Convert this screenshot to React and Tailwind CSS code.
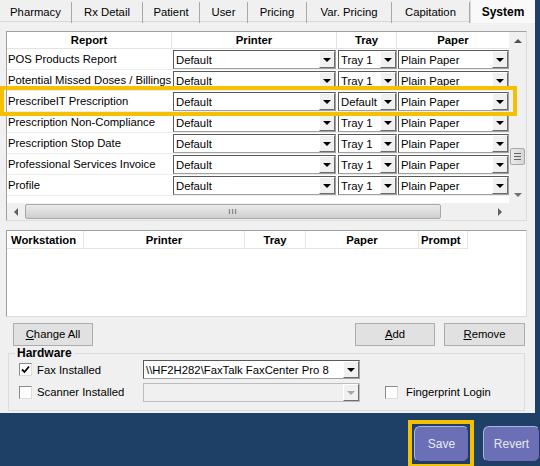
import React from 'react';

const rows = [
    { name: 'POS Products Report', printer: 'Default', tray: 'Tray 1', paper: 'Plain Paper' },
    { name: 'Potential Missed Doses / Billings', printer: 'Default', tray: 'Tray 1', paper: 'Plain Paper' },
    { name: 'PrescribeIT Prescription', printer: 'Default', tray: 'Default', paper: 'Plain Paper' },
    { name: 'Prescription Non-Compliance', printer: 'Default', tray: 'Tray 1', paper: 'Plain Paper' },
    { name: 'Prescription Stop Date', printer: 'Default', tray: 'Tray 1', paper: 'Plain Paper' },
    { name: 'Professional Services Invoice', printer: 'Default', tray: 'Tray 1', paper: 'Plain Paper' },
    { name: 'Profile', printer: 'Default', tray: 'Tray 1', paper: 'Plain Paper' },
];

const tabs = [
    { label: 'Pharmacy', w: 'w-[72px]' },
    { label: 'Rx Detail', w: 'w-[71px]' },
    { label: 'Patient', w: 'w-[57px]' },
    { label: 'User', w: 'w-[48px]' },
    { label: 'Pricing', w: 'w-[59px]' },
    { label: 'Var. Pricing', w: 'w-[85px]' },
    { label: 'Capitation', w: 'w-[78px]' },
];

const DropBtn = ({ disabled }) => (
    <div className="w-[16px] h-full shrink-0 flex items-center justify-center bg-[#f0f0f0] border border-white border-r-[#6d6d6d] border-b-[#6d6d6d]">
        <div className={disabled
            ? 'border-x-[4px] border-t-[4px] border-x-transparent border-t-[#a6a6a6]'
            : 'border-x-[4px] border-t-[4px] border-x-transparent border-t-black'} />
    </div>
);

const Combo = ({ value, className, disabled }) => (
    <div className={`flex h-[19px] border border-[#a0a0a0] border-l-[#5a5a5a] border-t-[#5a5a5a] ${disabled ? 'bg-[#f0f0f0]' : 'bg-white'} ${className}`}>
        <div className="flex-1 overflow-hidden whitespace-nowrap pl-[2px] leading-[18px]">{value}</div>
        <DropBtn disabled={disabled} />
    </div>
);

const Check = ({ checked }) => (
    <div className="w-[13px] h-[13px] shrink-0 bg-white border border-[#8a8a8a] border-b-[#dcdcdc] border-r-[#dcdcdc] flex items-center justify-center">
        {checked && (
            <svg width="9" height="9" viewBox="0 0 9 9">
                <path d="M1 4.5 L3.5 7 L8 1.5" stroke="black" strokeWidth="1.8" fill="none" />
            </svg>
        )}
    </div>
);

const WinButton = ({ children, className }) => (
    <button className={`h-[23px] bg-[#e1e1e1] border border-[#adadad] ${className}`}>
        {children}
    </button>
);

const App = () => {
    return (
        <div className="relative w-[540px] h-[466px] overflow-hidden bg-[#1e3f66] text-[11.3px] text-black font-['Liberation_Sans',Arial,sans-serif]">
            <div className="w-[535px] h-[413px] bg-[#f0f0f0] flex flex-col">
                {/* tabs */}
                <div className="h-[22px] flex shrink-0 border-b border-[#d9d9d9]">
                    {tabs.map((t) => (
                        <div key={t.label} className={`${t.w} h-full flex items-center justify-center border-r border-[#a8a8a8] my-[2px]`}>
                            {t.label}
                        </div>
                    ))}
                    <div className="w-[65px] h-[23px] flex items-center justify-center font-bold text-[12px] bg-[#f9f9f9] border-l border-[#d9d9d9]">
                        System
                    </div>
                </div>

                {/* report grid */}
                <div className="ml-[6px] mt-[9px] w-[521px] h-[190px] shrink-0 bg-white border border-[#a0a0a0] border-b-[#dcdcdc] border-r-[#dcdcdc] flex">
                    <div className="w-[502px] flex flex-col">
                        <div className="h-[17px] flex font-bold border-b border-[#e3e3e3]">
                            <div className="w-[165px] text-center border-r border-[#e3e3e3] leading-[17px]">Report</div>
                            <div className="w-[165px] text-center border-r border-[#e3e3e3] leading-[17px]">Printer</div>
                            <div className="w-[60px] text-center border-r border-[#e3e3e3] leading-[17px]">Tray</div>
                            <div className="w-[112px] text-center leading-[17px]">Paper</div>
                        </div>
                        {rows.map((r) => (
                            <div key={r.name} className="h-[21px] flex border-b border-[#ececec]">
                                <div className="w-[165px] pl-[1px] flex items-center whitespace-nowrap overflow-hidden">{r.name}</div>
                                <div className="w-[165px] pt-[1px] pl-[1px] pr-[1px]">
                                    <Combo value={r.printer} className="w-full" />
                                </div>
                                <div className="w-[60px] pt-[1px] pl-[1px]">
                                    <Combo value={r.tray} className="w-full" />
                                </div>
                                <div className="w-[112px] pt-[1px] pl-[1px]">
                                    <Combo value={r.paper} className="w-full" />
                                </div>
                            </div>
                        ))}
                        <div className="flex-1" />
                        {/* horizontal scrollbar */}
                        <div className="h-[17px] flex items-center bg-[#f0f0f0]">
                            <div className="w-[18px] flex justify-center">
                                <div className="border-y-[4px] border-r-[4px] border-y-transparent border-r-[#606060]" />
                            </div>
                            <div className="w-[416px] h-[15px] rounded-[2px] border border-[#a8a8a8] bg-gradient-to-b from-[#ebebeb] to-[#cfcfcf] flex items-center justify-center">
                                <span className="text-[8px] text-[#555] tracking-[1px] leading-none">III</span>
                            </div>
                            <div className="flex-1" />
                            <div className="w-[18px] flex justify-center">
                                <div className="border-y-[4px] border-l-[4px] border-y-transparent border-l-[#606060]" />
                            </div>
                        </div>
                    </div>
                    {/* vertical scrollbar */}
                    <div className="w-[17px] flex flex-col bg-[#f0f0f0]">
                        <div className="h-[17px] flex items-center justify-center">
                            <div className="border-x-[4px] border-b-[4px] border-x-transparent border-b-[#505050]" />
                        </div>
                        <div className="h-[99px]" />
                        <div className="mx-[1px] h-[17px] rounded-[2px] border border-[#a8a8a8] bg-gradient-to-r from-[#ebebeb] to-[#d6d6d6] flex flex-col items-center justify-center gap-[2px]">
                            <div className="w-[7px] h-px bg-[#666]" />
                            <div className="w-[7px] h-px bg-[#666]" />
                            <div className="w-[7px] h-px bg-[#666]" />
                        </div>
                        <div className="flex-1" />
                        <div className="h-[17px] flex items-center justify-center">
                            <div className="border-x-[4px] border-t-[4px] border-x-transparent border-t-[#707070]" />
                        </div>
                        <div className="h-[17px]" />
                    </div>
                </div>

                {/* workstation list */}
                <div className="ml-[6px] mt-[9px] w-[521px] h-[87px] shrink-0 bg-white border border-[#a0a0a0] border-b-[#dcdcdc] border-r-[#dcdcdc]">
                    <div className="h-[18px] flex font-bold">
                        <div className="w-[77px] pl-[4px] border-r border-b border-[#e5e5e5] leading-[18px]">Workstation</div>
                        <div className="w-[161px] text-center border-r border-b border-[#e5e5e5] leading-[18px]">Printer</div>
                        <div className="w-[61px] text-center border-r border-b border-[#e5e5e5] leading-[18px]">Tray</div>
                        <div className="w-[113px] text-center border-r border-b border-[#e5e5e5] leading-[18px]">Paper</div>
                        <div className="w-[49px] pl-[2px] border-r border-b border-[#e5e5e5] leading-[18px]">Prompt</div>
                    </div>
                </div>

                {/* buttons */}
                <div className="mt-[6px] flex shrink-0">
                    <WinButton className="ml-[13px] w-[80px]"><span className="underline">C</span>hange All</WinButton>
                    <div className="flex-1" />
                    <WinButton className="w-[80px]"><span className="underline">A</span>dd</WinButton>
                    <WinButton className="ml-[9px] mr-[10px] w-[81px]"><span className="underline">R</span>emove</WinButton>
                </div>

                {/* hardware */}
                <fieldset className="ml-[8px] mt-[1px] w-[517px] h-[64px] border border-[#dcdcdc] px-[10px]">
                    <legend className="ml-[-4px] px-[2px] font-bold text-[12px] leading-[13px]">Hardware</legend>
                    <div className="flex items-center h-[19px]">
                        <div className="w-[124px] flex items-center gap-[5px]">
                            <Check checked />
                            <span className="mt-[2px]">Fax Installed</span>
                        </div>
                        <Combo value="\\HF2H282\FaxTalk FaxCenter Pro 8" className="w-[217px]" />
                    </div>
                    <div className="flex items-center h-[19px] mt-[4px]">
                        <div className="w-[124px] flex items-center gap-[5px]">
                            <Check />
                            <span>Scanner Installed</span>
                        </div>
                        <Combo value="" className="w-[217px] border-[#bdbdbd] border-l-[#bdbdbd] border-t-[#bdbdbd]" disabled />
                        <div className="ml-[25px] flex items-center gap-[8px]">
                            <Check />
                            <span>Fingerprint Login</span>
                        </div>
                    </div>
                </fieldset>
            </div>

            {/* bottom actions */}
            <div className="flex justify-end gap-[14px] pt-[13px]">
                <button className="w-[55px] h-[36px] rounded-[6px] bg-[#6a6fb6] text-[#e8e8f4] text-[12px] border border-[#a9b4e4] border-r-[#2e3366] border-b-[#2e3366]">
                    Save
                </button>
                <button className="w-[57px] h-[36px] rounded-[6px] bg-[#6a6fb6] text-[#e8e8f4] text-[12px] border border-[#a9b4e4] border-r-[#2e3366] border-b-[#2e3366]">
                    Revert
                </button>
            </div>

            {/* highlight overlays */}
            <div className="absolute left-0 top-[86px] w-[517px] h-[30px] border-[4px] border-[#f5c000] pointer-events-none" />
            <div className="absolute left-[408px] top-[420px] w-[66px] h-[48px] border-[4px] border-[#f5c000] pointer-events-none" />
        </div>
    );
};

export default App;
